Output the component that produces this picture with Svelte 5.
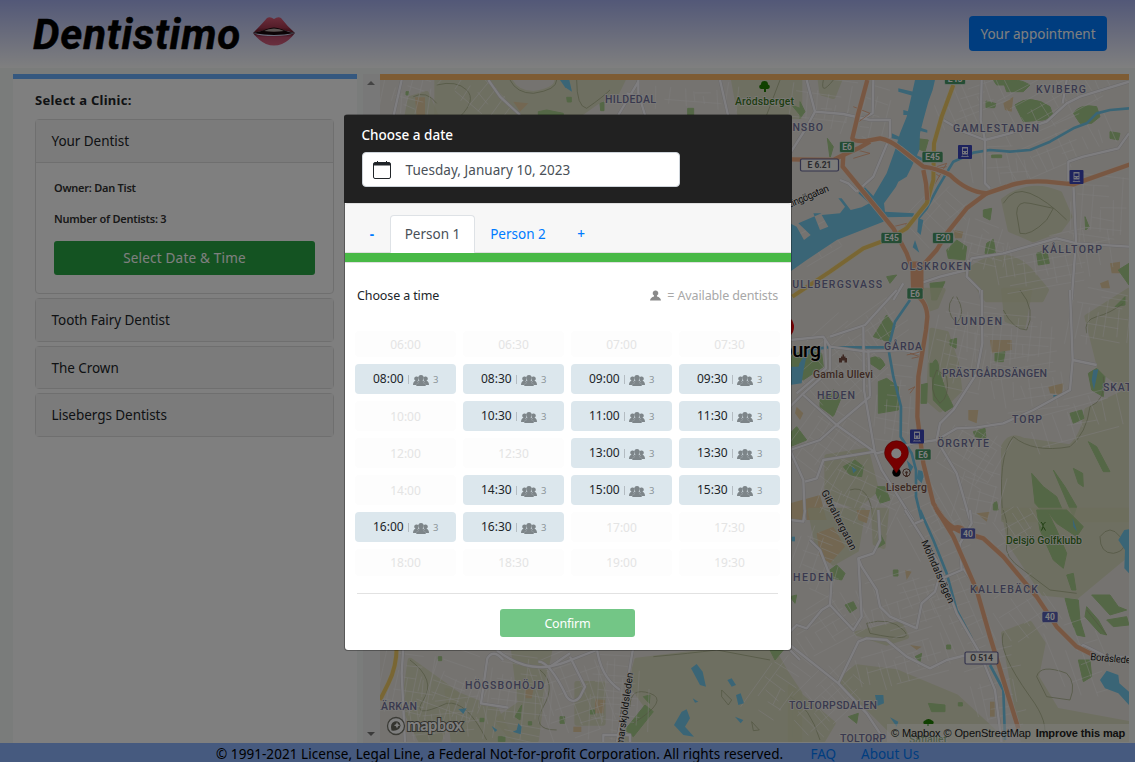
<script>
  const clinics = ['Tooth Fairy Dentist', 'The Crown', 'Lisebergs Dentists'];

  const open = new Set([
    '08:00', '08:30', '09:00', '09:30', '10:30', '11:00', '11:30', '13:00',
    '13:30', '14:30', '15:00', '15:30', '16:00', '16:30'
  ]);
  const slots = [];
  for (let h = 6; h < 20; h++) {
    for (const m of ['00', '30']) {
      const time = String(h).padStart(2, '0') + ':' + m;
      slots.push({ time, free: open.has(time) });
    }
  }

  // Map tiles: each tile has its own origin and is drawn at three units per pixel.
  const tiles = [
    {
      x: 370, y: 60,
      wood: ['M200 60L420 60Q440 100 490 100Q560 90 560 60L760 60L740 100L690 120L620 170L200 170Z', 'M1090 60H1290V170H1110Z', 'M120 115L170 100L200 170H110Z'],
      park: ['M505 155L530 150L580 160V172H505Z', 'M690 130l12 -4v26h-10Z', 'M953 145h18v24h-18Z', 'M590 112h14v14h-12Z', 'M1265 135l25 10v20Z', 'M108 95h8v10h-8Z'],
      sand: ['M135 112h30v55h-25Z', 'M430 125L475 130L450 155Z'],
      water: ['M570 60H598L606 95L585 82Z'],
      road: ['M95 60L70 170', 'M355 60L390 110L450 165', 'M805 60V100L825 165', 'M805 65L745 165', 'M1050 60L1075 170', 'M770 100L820 110'],
      trail: ['M200 75Q260 60 290 90T270 170', 'M420 60Q440 100 490 100Q560 90 560 60', 'M620 60Q620 140 650 145Q700 110 720 90', 'M1230 60L1190 165', 'M130 110Q170 90 200 130']
    },
    {
      x: 790, y: 70,
      wood: ['M530 605Q640 520 720 600L770 660L755 690H590Z', 'M640 390Q720 330 810 370L840 440L810 480L730 510L660 480Z', 'M90 30H150L130 80L95 70Z'],
      park: ['M675 105Q720 70 780 110L790 140L760 150L700 155Z', 'M850 130Q870 100 920 110L930 140L905 160H870Z', 'M640 35Q680 20 720 45L700 65H650Z', 'M375 205L415 210L405 245L370 230Z', 'M470 540L500 510L530 530L525 570L475 565Z', 'M590 520L610 508L617 550H585Z', 'M740 550L770 540L778 580L745 585Z', 'M420 640L465 635L440 690H425Z', 'M960 185L990 190L985 210L960 205Z', 'M985 600L1017 580V645Z', 'M580 420L605 415L600 450L580 440Z', 'M30 95L45 125L30 145Z', 'M112 205L130 230L120 265Z', 'M290 620L320 615L300 640Z', 'M588 93l30 8l-4 12h-26Z', 'M605 255h30v8h-30Z', 'M885 440l12 30l-10 10Z', 'M610 30h40v15h-30Z'],
      sand: ['M640 100L670 80L665 125L645 120Z', 'M490 480L520 485L515 505H495Z', 'M960 580L990 575V610H965Z', 'M930 640L955 630L960 655H935Z'],
      water: ['M375 30H435L428 60L415 95L400 150L390 190L388 240L365 290L350 320L325 335L318 350L282 400L285 425L372 430L370 440L290 442L280 455L140 510L50 570L0 605V460L20 470L42 510L62 495L25 460L95 430L70 430L90 480L115 470L95 435L150 430L165 410L145 385H155L182 420L215 412L238 400L205 370L225 352L250 378L290 310L315 240L330 190L350 140L365 75Z', 'M325 55L370 65V78L325 65Z', 'M340 120L360 125V135H340Z', 'M388 172L412 180V188L388 182Z', 'M305 190L328 200V210L305 205Z', 'M385 445L400 450L392 495L382 485Z', 'M375 510L388 548L368 532Z'],
      river: ['M385 445L410 415L445 350L490 275L550 248L600 240L660 245L720 240L780 215L850 175L890 160L920 130L960 120L1020 115', 'M300 215L360 250L400 270'],
      road: ['M50 30L75 125L160 132L240 150L300 150V200L250 320L200 365', 'M250 30L248 130L220 145', 'M75 125L45 180L0 250', 'M575 30L572 150L585 210V340L600 355', 'M460 150L520 185L585 210L660 190L770 155L830 100L870 80L1017 35', 'M830 30L818 100', 'M850 340L858 510L845 690', 'M1017 190L985 235L880 260L835 275V340', 'M390 640L450 620L530 600L545 565L640 550L800 505L860 520L1017 530', 'M535 570L530 620L570 660L575 690', 'M340 640L310 690', 'M150 330L175 340L200 365'],
      trunk: ['M490 45L455 140L432 220L430 330L410 400L350 475L300 505L220 535L120 605L7 680'],
      motorway: ['M232 30L205 130L187 205Q190 215 230 213L270 205Q300 210 330 235L400 290Q440 295 480 315Q530 365 590 370L650 350Q700 330 770 335L850 343L1020 283', 'M0 268L130 270L160 255L205 235L240 215', 'M160 255L158 290L240 390L310 475L350 550L368 600L370 670', 'M590 370L530 415L470 490L440 540L395 590', 'M400 300L408 340L412 390'],
      ramp: ['M190 110L240 130L200 160', 'M160 230L240 250L190 265', 'M310 470L350 460L330 500', 'M440 290L470 280L430 350L400 340', 'M450 320L420 300L470 290'],
      trail: ['M680 430Q680 390 720 400L790 415L770 450Q720 500 690 490Z', 'M640 400Q670 350 720 370T830 450', 'M100 30Q90 80 130 30']
    },
    {
      x: 790, y: 290,
      wood: ['M640 470Q660 430 700 450L840 470Q880 440 890 360L1017 300V690H640Z', 'M425 120L470 130L500 220L510 300L450 360L415 330Z', 'M890 80L1017 0V300L930 240Z', 'M400 0H460L440 50L410 60Z', 'M640 0H720L700 110L650 90Z', 'M110 500L230 480L260 600L200 650L110 620Z'],
      park: ['M250 140L290 75L315 110L295 155Z', 'M0 200L40 180L95 190L100 230L40 270L0 260Z', 'M240 205Q270 190 285 225L270 240L240 220Z', 'M265 275L290 265L325 290V360L265 370Z', 'M90 330L130 300L155 320L130 380L90 350Z', 'M0 430L20 410L50 450L0 470Z', 'M615 190L645 185L640 215H615Z', 'M480 150L500 145L498 175L480 165Z', 'M425 230Q440 180 450 250L470 310L490 350L465 365L430 330Z', 'M895 250L920 235L945 260L940 320L905 300Z', 'M840 370L875 360L882 385L850 400Z', 'M550 425L585 415L588 445L555 440Z', 'M390 285L412 280L410 340H392Z', 'M895 455L920 470L960 545L940 545Z', 'M195 510L220 530L215 560L180 555L160 530Z', 'M262 590L285 590L300 630L270 640L258 610Z', 'M725 550L760 590L800 620L830 690H780L735 640Z', 'M790 540L825 590L860 650L850 680Z', 'M850 535L878 550L880 590L865 580Z', 'M975 50L1005 20V45Z', 'M610 640L620 635L625 660H610Z', 'M420 220h10v40h-10Z'],
      sand: ['M600 150L665 150V180L605 190Z', 'M775 290L820 280L815 315L780 310Z', 'M535 360L565 360L560 400L535 390Z', 'M20 350L40 370L30 390L15 370Z', 'M0 640L90 615L110 690H0Z'],
      water: ['M0 230L25 230L40 200L50 195L40 245L35 280L0 285Z', 'M385 540L405 545L395 580L380 565Z', 'M910 240L925 238L912 300L905 270Z', 'M790 315h14v8h-14Z', 'M185 530L200 540L190 550Z', 'M350 510L370 530L360 550Z'],
      river: ['M360 30L315 95L295 175L310 260L333 350L332 440L365 490L378 540V620L395 690', 'M30 225L60 180L110 172L295 172'],
      road: ['M0 150L100 140L120 170L230 185L340 180L395 190', 'M120 170V240L35 315L0 350', 'M105 150L108 235L20 310', 'M220 110L222 300L255 490L275 540L350 660L370 690', 'M235 180L240 320', 'M320 0L225 105L120 140', 'M40 315L140 405L260 490', 'M240 320L140 405L90 450L0 480', 'M575 0L577 160L560 250L490 360L450 400L440 450L500 550L540 690', 'M840 0L848 210L840 300L730 360L640 400L560 412L500 415L440 450L370 460L260 490', 'M0 480L40 570L45 690', 'M45 575L80 565L100 510L255 485', 'M848 210L920 225'],
      motorway: ['M370 10Q410 30 412 80L408 120L385 260L382 380L400 520L430 640L470 700'],
      ramp: ['M360 190L390 200L365 205', 'M355 300L375 290L360 310', 'M350 195L395 185'],
      trail: ['M640 690Q620 500 670 440Q730 490 840 470Q890 430 900 350Q950 330 940 260', 'M890 130Q880 90 920 80T1000 40', 'M440 240Q410 300 450 340Q480 320 470 260Z', 'M490 20Q460 60 500 100Q530 70 500 20', 'M690 0Q740 60 710 120Q670 120 640 60', 'M180 600Q240 580 250 690']
    },
    {
      x: 790, y: 510,
      wood: ['M150 510L200 470L320 485L500 560L640 690H330L240 600Z', 'M640 0H1017V130L860 260L760 250L660 100Z', 'M640 370L720 340L760 400L740 500L800 600L1017 640V700H700Z', 'M200 370L330 340L350 380L290 400Z', 'M250 0H290L280 110L255 100Z', 'M0 530L130 640L100 690H0Z', 'M60 0H220L200 120L130 160L80 100Z'],
      park: ['M740 0H770L800 60L830 130L820 175L790 150L750 60Z', 'M770 0H830L880 50L860 80L800 40Z', 'M120 180L140 165L165 190L155 210L130 205Z', 'M165 285L190 275L200 295L180 308Z', 'M825 265L865 270L870 330L885 380L860 375L840 320Z', 'M890 290L925 330L950 375L930 370L885 320Z', 'M905 255L960 255L985 290L1010 300L960 315Z', 'M950 330L1010 320L1017 345L970 350Z', 'M865 450L900 450L905 500L880 515Z', 'M415 580L465 585V605H425Z', 'M310 180h14v18h-14Z', 'M470 405h12v12h-12Z', 'M270 70L285 100L265 112Z', 'M0 260L20 255L15 280Z', 'M375 440L395 430L390 455Z', 'M830 195L850 190L858 240L845 240Z', 'M175 620L205 610L200 640Z', 'M505 578h12v10h-12Z'],
      sand: ['M80 70L130 50L165 110L120 160L90 140Z', 'M120 0L140 25L125 15Z', 'M200 0H240L230 40L205 30Z', 'M560 10L600 5L590 35Z', 'M345 180L365 185L350 210Z', 'M360 405L395 410L380 420Z', 'M600 575h14v45h-14Z'],
      water: ['M985 90L1003 60L1017 58V190L1003 175L1005 120Z', 'M930 510L950 482L985 495L988 520L1017 545V585L985 550L945 535Z', 'M255 555L280 555L282 580L262 588Z', 'M300 622L325 635L320 650Z', 'M848 25L862 65L850 50Z', 'M5 80h10v14H5Z'],
      river: ['M390 0L430 90L470 190L500 300L545 385', 'M600 465L640 540L645 690'],
      road: ['M345 0L440 150L500 310L570 430L615 540L635 700', 'M540 0L545 40L510 100L515 180L445 210L435 245L395 280L380 355L300 320L270 290L260 240L215 170L205 145L250 130L270 90L265 0', 'M205 145L215 320L190 360L120 285L95 300L50 355L20 345L0 365', 'M120 285L125 210L90 120L60 90', 'M0 405L145 520L230 610L270 670', 'M145 520L205 395L230 385L290 390L350 440L420 475L470 450L530 435', 'M520 175L550 220', 'M375 40L400 30', 'M860 420L880 405L950 440L1017 440', 'M0 30L40 35L45 0'],
      motorway: ['M435 -10L490 80L560 240L600 380L640 510L685 655', 'M440 0Q480 60 530 70L580 85L640 140L740 260L800 350L860 410L910 435', 'M480 60Q510 40 530 70'],
      trail: ['M640 0Q660 60 650 100T700 180L780 240L860 250', 'M760 690Q780 640 720 560Q620 420 640 370', 'M890 300L950 375', 'M740 500Q750 460 830 490Q860 520 840 570L770 560Z', 'M0 560Q60 590 90 690', 'M230 340Q300 320 340 360T240 370Z', 'M930 80Q960 40 990 80T970 130Q930 130 930 80']
    },
    {
      x: 370, y: 640,
      wood: ['M800 60L1040 30H1210L1250 100L1290 160V310H760L830 200L780 130Z', 'M120 60L260 160L210 300H150L100 200Z', 'M430 30H540L520 130L500 300H430L380 240L450 190Z', 'M620 130H700V250H620Z', 'M230 150L380 210L430 310H250Z'],
      park: ['M765 270L825 195L850 215L790 290Z', 'M435 230L455 195L450 240Z', 'M1200 30H1240L1215 60Z', 'M820 170L840 165L838 190Z', 'M570 230h14v20h-14Z', 'M330 235h12v10h-12Z', 'M660 210h14v12h-14Z', 'M385 290h20v15h-20Z', 'M205 50h10v12h-10Z', 'M475 245h10v10h-10Z'],
      sand: ['M675 178L705 180L700 220H675Z', 'M465 145L490 150L485 175H467Z', 'M610 260h24v16h-24Z'],
      water: ['M963 85L980 72L998 95L1008 140L990 135Z', 'M912 255L935 215L950 208L960 235L945 260L972 290L940 285Z', 'M1072 120L1085 115L1098 135L1085 140Z', 'M1098 165L1112 160L1122 190L1105 195Z', 'M265 207L290 205L280 222Z', 'M428 275L440 270L445 250L455 260L452 283Z', 'M365 258L382 270L375 276Z', 'M968 175L985 185L975 188Z', 'M1095 230L1120 240L1112 250Z'],
      trunk: ['M80 20Q80 80 55 130L30 180'],
      road: ['M100 20L95 100L105 310', 'M400 60Q370 25 352 55L333 190L415 203', 'M380 30Q480 110 590 65L680 30', 'M505 65Q540 65 590 170Q610 195 630 170L645 140L600 50', 'M680 20Q690 110 750 150', 'M790 20L770 140L740 310', 'M700 310V285H780V310', 'M1260 30L1290 60', 'M540 80L600 40'],
      trail: ['M120 60Q200 120 160 180T230 190Q290 180 350 300', 'M850 50Q960 40 1040 30L1200 60', 'M780 200Q780 140 840 160T790 250', 'M1055 150L1085 180L1075 195L1055 170Z', 'M1145 245L1168 270L1150 272Z', 'M510 90Q560 130 520 200T560 270']
    }
  ];

  // Faint residential street grids: centre, half extents, angle and spacing.
  const districts = [
    [410, 95, 28, 20, 12, 8], [480, 98, 40, 18, 40, 9], [700, 96, 45, 18, 5, 10], [825, 105, 34, 26, 8, 10],
    [868, 115, 20, 30, 15, 9], [975, 100, 40, 22, -20, 8], [1055, 100, 60, 26, -28, 9], [1060, 148, 55, 24, -24, 9],
    [1000, 165, 30, 20, -8, 9], [940, 215, 30, 24, -45, 9], [1100, 210, 30, 35, 5, 8], [1055, 260, 60, 25, -10, 8],
    [980, 245, 28, 24, 15, 8], [825, 240, 36, 18, -30, 9], [880, 330, 30, 22, -35, 9], [840, 365, 38, 40, -42, 10],
    [895, 410, 20, 45, 8, 8], [960, 350, 28, 48, 12, 9], [1010, 345, 45, 30, 5, 7], [1030, 385, 38, 28, -8, 8],
    [1100, 320, 30, 30, 10, 8], [1080, 420, 50, 24, -15, 10], [975, 450, 30, 30, 30, 8], [830, 450, 36, 36, 35, 9],
    [860, 500, 40, 30, 25, 8], [930, 520, 28, 40, -28, 9], [980, 500, 22, 30, 15, 9], [1015, 530, 26, 20, -30, 9],
    [820, 560, 26, 32, 20, 8], [905, 600, 44, 28, -18, 8], [830, 625, 36, 25, -30, 8], [905, 660, 48, 24, -16, 8],
    [965, 620, 24, 50, -22, 10], [1000, 690, 28, 40, -14, 9], [1030, 610, 32, 30, -35, 12], [1085, 660, 30, 40, -20, 14],
    [830, 700, 40, 28, -42, 8], [410, 680, 28, 40, 10, 8], [455, 690, 36, 40, 20, 9], [520, 700, 40, 44, 8, 8],
    [575, 690, 36, 50, -20, 9], [620, 700, 30, 44, 4, 7], [780, 690, 22, 40, 35, 9], [450, 720, 40, 20, -5, 8]
  ];
  function streets([cx, cy, w, h, , s], seed) {
    let d = '';
    let r = seed * 7919 + 13;
    const rnd = () => (r = (r * 16807) % 2147483647) / 2147483647;
    rnd();
    for (let x = -w; x <= w; x += s * (0.8 + rnd() * 0.8)) {
      const a = -h + rnd() * h;
      d += `M${cx + x} ${cy + a}L${cx + x + rnd() * 5 - 2} ${cy + h - rnd() * h * 0.7}`;
    }
    for (let y = -h; y <= h; y += s * (0.8 + rnd() * 0.9)) {
      const a = -w + rnd() * w;
      d += `M${cx + a} ${cy + y}L${cx + w - rnd() * w * 0.8} ${cy + y + rnd() * 5 - 2}`;
    }
    return d;
  }

  // name, left, baseline, width
  const areas = [
    ['HILDEDAL', 605, 103, 51], ['KVIBERG', 1036, 93, 50], ['GAMLESTADEN', 953, 132, 86], ['RUNSBO', 777, 131, 46],
    ['KÅLLTORP', 1042, 253, 60], ['OLSKROKEN', 901, 270, 70], ['GULLBERGSVASS', 784, 288, 98], ['LUNDEN', 954, 325, 48],
    ['GÅRDA', 884, 350, 38], ['PRÄSTGÅRDSÄNGEN', 942, 377, 105], ['SKATÅS', 1103, 391, 43], ['HEDEN', 817, 399, 38],
    ['TORP', 1012, 423, 30], ['ÖRGRYTE', 937, 447, 52], ['HEDEN', 793, 581, 40], ['KALLEBÄCK', 970, 593, 68],
    ['TOLTORPSDALEN', 789, 709, 88], ['TOLTORP', 840, 742, 46], ['HÖGSBOHÖJD', 465, 689, 79], ['LÄRKAN', 375, 710, 42]
  ];
  // text, centre x, centre y, width, kind
  const shields = [
    ['E6', 847, 147, 15, 'green'], ['E45', 932.500, 157, 21, 'green'], ['E45', 955, 79, 21, 'green'],
    ['E45', 891.500, 238, 21, 'green'], ['E20', 943, 238, 21, 'green'], ['E6', 915, 293.500, 16, 'green'],
    ['E6', 923, 454.500, 16, 'green'], ['40', 968, 533.500, 15, 'blue'], ['40', 1050, 617, 16, 'blue'],
    ['E 6.21', 819.500, 165, 38, 'white'], ['O 514', 981.500, 658, 33, 'white']
  ];
  const stations = [[965, 152], [1076.500, 177], [917, 436.500]];
</script>

{#snippet people()}
  <svg class="people" viewBox="0 0 16 11" aria-hidden="true">
    <path d="M3.700 1.500a2 2 0 0 1 1.400.5A3.500 3.500 0 0 0 5.500 5Q4 6 3.500 10H0Q0 6.500 2.500 5.700A2.200 2.200 0 0 1 3.700 1.500ZM12.300 1.500a2 2 0 0 0-1.400.5A3.500 3.500 0 0 1 10.500 5Q12 6 12.500 10H16Q16 6.500 13.500 5.700A2.200 2.200 0 0 0 12.300 1.500Z" />
    <path d="M8 0a2.800 2.800 0 0 1 1.500 5.200Q12.500 6.300 12.700 9.500V11H3.300V9.500Q3.500 6.300 6.500 5.200A2.800 2.800 0 0 1 8 0Z" />
    <path d="M4.500 9L6 6.500M11.500 9L10 6.500" stroke="#a5adb2" stroke-width=".5" />
  </svg>
{/snippet}

<div class="page">
  <header class="top">
    <div class="logo">
      <span>Dentistimo</span>
      <svg viewBox="0 0 44 30" class="lips" aria-hidden="true">
        <defs>
          <linearGradient id="upper" x1="0" y1="0" x2="0" y2="1"><stop offset="0" stop-color="#d85a76" /><stop offset=".65" stop-color="#a83a52" /><stop offset="1" stop-color="#591622" /></linearGradient>
          <linearGradient id="lower" x1="0" y1="0" x2="0" y2="1"><stop offset="0" stop-color="#5a1a2c" /><stop offset=".35" stop-color="#c05070" /><stop offset="1" stop-color="#d4607e" /></linearGradient>
        </defs>
        <path d="M1 17Q8 20 22 20T43 17Q37 25 30 28Q22 31 14 28Q7 25 1 17Z" fill="url(#lower)" />
        <path d="M1 17Q10 8 15 2Q18 0 22 3Q26 0 29 2Q35 10 43 17Q34 15 30 14Q22 11 14 14Z" fill="url(#upper)" />
        <path d="M1 17Q10 15 15 13Q22 10 29 13Q35 16 43 17Q32 19 22 19T1 17Z" fill="#16060a" />
        <path d="M12 15Q16 12.500 22 12.500T32 15Q22 16.500 12 15Z" fill="#b5a8a4" />
      </svg>
    </div>
    <button class="appointment"><span>Your appointment</span></button>
  </header>

  <main>
    <aside>
      <h2>Select a Clinic:</h2>
      <section class="card first">
        <div class="card-head">Your Dentist</div>
        <div class="card-body">
          <p class="owner">Owner: Dan Tist</p>
          <p class="count">Number of Dentists: 3</p>
          <button class="select">Select Date &amp; Time</button>
        </div>
      </section>
      {#each clinics as c}
        <section class="card"><div class="card-head">{c}</div></section>
      {/each}
    </aside>
    <div class="scroll"><i class="up"></i><i class="down"></i></div>
    <div class="map">
      <svg viewBox="380 80 749 662" width="749" height="662">
        <rect x="380" y="80" width="749" height="662" fill="#ebe7e1" />
        {#each tiles as t}
          <g transform="translate({t.x} {t.y}) scale(.33333)">
            {#each t.wood as d}<path {d} fill="#d9dcb9" opacity=".75" stroke="#d9dcb9" stroke-width="14" stroke-linejoin="round" />{/each}
            {#each t.sand as d}<path {d} fill="#e6cfa4" />{/each}
            {#each t.park as d}<path {d} fill="#a9ce8c" stroke="#a9ce8c" stroke-width="3" stroke-linejoin="round" />{/each}
            {#each t.trail as d}<path {d} fill="none" stroke="#a5ad83" stroke-width="2.200" />{/each}
          </g>
        {/each}
        {#each districts as g, i}
          <path d={streets(g, i + 1)} transform="rotate({g[4]} {g[0]} {g[1]})" stroke="#fdfbfa" stroke-width=".8" opacity=".55" fill="none" />
        {/each}
        {#each tiles as t}
          <g transform="translate({t.x} {t.y}) scale(.33333)" fill="none" stroke-linejoin="round">
            {#each t.water as d}<path {d} fill="#74cbed" />{/each}
            {#each t.river ?? [] as d}<path {d} stroke="#74cbed" stroke-width="8" />{/each}
          </g>
        {/each}
        {#each tiles as t}
          <g transform="translate({t.x} {t.y}) scale(.33333)" fill="none" stroke-linejoin="round">
            {#each t.road as d}<path {d} stroke="#d5d2d3" stroke-width="10" />{/each}
            {#each t.road as d}<path {d} stroke="#fcfbff" stroke-width="7" />{/each}
            {#each t.ramp ?? [] as d}<path {d} stroke="#eeaa82" stroke-width="2.500" />{/each}
            {#each t.trunk ?? [] as d}<path {d} stroke="#efe8d0" stroke-width="17" /><path {d} stroke="#f2cd67" stroke-width="12" />{/each}
          </g>
        {/each}
        {#each tiles as t}
          <g transform="translate({t.x} {t.y}) scale(.33333)" fill="none" stroke-linejoin="round">
            {#each t.motorway ?? [] as d}<path {d} stroke="#f2e4d8" stroke-width="17" />{/each}
            {#each t.motorway ?? [] as d}<path {d} stroke="#f0ae85" stroke-width="13" />{/each}
          </g>
        {/each}
        <path d="M911 264l5 0v24h5v-20" stroke="#f0ae85" stroke-width="5" fill="none" />

        <g class="area">
          {#each areas as [name, x, y, w]}<text {x} {y} textLength={w}>{name}</text>{/each}
        </g>

        <g class="street">
          <text textLength="44" transform="translate(789 208) rotate(-23)">Lingögatan</text>
          <text textLength="66" transform="translate(821 492) rotate(63)">Gibraltargatan</text>
          <text textLength="68" transform="translate(921 542) rotate(66)">Mölndalsvägen</text>
          <text textLength="95" transform="translate(620 767) rotate(-82)">Hammarskjöldsleden</text>
          <text textLength="46" transform="translate(1090 660) rotate(5)">Boråsleden</text>
        </g>
        <text class="city" x="718" y="357" textLength="103">Gothenburg</text>
        <g class="poi green">
          <text x="735" y="105" textLength="59">Arödsberget</text>
          <text x="1006" y="544" textLength="76">Delsjö Golfklubb</text>
          <text x="909" y="743" textLength="38">Safjället</text>
        </g>
        <g class="poi brown">
          <text x="813" y="378" textLength="60">Gamla Ullevi</text>
          <text x="886" y="491" textLength="41">Liseberg</text>
        </g>
        <g fill="#1f8000">
          <path d="M764 92v-3h-3a2.300 2.300 0 0 1 0-4.500a3.500 3.500 0 0 1 7 0a2.300 2.300 0 0 1 0 4.500h-2v3Z" />
          <path d="M927 726v-2h-3a2 2 0 0 1 1-3.500a4 3 0 0 1 7 0a2 2 0 0 1 1 3.500h-4v2Z" />
        </g>
        <path d="M1041 522l2 2.500l2.500-2.500M1043 524v3l-1.500 3.500M1043.500 527l2 3.500" stroke="#3d7a23" fill="none" />
        <path d="M839 362v-4h2v-1.500h1.500v-2h1.500v2h1.500v1.500h1.500v4.500h-2.500v-2h-2.500v2h-3Z" fill="#7a5144" />
        <g stroke="#7a5144" fill="none"><circle cx="906.500" cy="472.500" r="3.700" /><path d="M906.500 472v4M905 476.500h3" /><circle cx="906.500" cy="472.500" r="1" /></g>

        {#each shields as [t, x, y, w, kind]}
          <g class="shield {kind}">
            <rect x={x - w / 2} y={y - (kind === 'white' ? 6 : 5.5)} width={w} height={kind === 'white' ? 12 : 11} rx="1.500" />
            <text {x} y={y + 3} text-anchor="middle">{t}</text>
          </g>
        {/each}
        {#each stations as [x, y]}
          <g transform="translate({x - 7} {y - 7})">
            <rect width="14" height="14" rx="1" fill="#3c47bd" />
            <path d="M4 2h6v7.500H4ZM5 3.500v2.500h4V3.500ZM5 7v1h1v-1ZM8 7v1h1v-1Z" fill="#e8e8fa" fill-rule="evenodd" />
            <path d="M3.500 12l1-1.500M10.500 12l-1-1.500M4 11.500h6" stroke="#e8e8fa" stroke-width=".8" fill="none" />
          </g>
        {/each}

        <circle cx="782" cy="327" r="12" fill="#e80008" />
        <circle cx="896.500" cy="472.500" r="4.200" fill="#000" />
        <g transform="translate(0 1)">
          <path d="M896.300 472Q893 466 888 460A11.900 11.900 0 1 1 905 460Q900 466 896.300 472Z" fill="#ec0000" stroke="#a00000" stroke-width=".6" />
          <circle cx="896.300" cy="452.500" r="5" fill="#fff" />
        </g>

        <g fill="#fff" fill-opacity=".9" stroke="#77776c">
          <circle cx="396" cy="726" r="8.500" stroke-width="1.300" />
        </g>
        <path d="M391.500 730.500q-2-7 3-9q5-1 6 4q-1 6-9 5Z" fill="#66665c" />
        <path d="M397 722l1 2.200l2.200 1l-2.200 1l-1 2.200l-1-2.200l-2.200-1l2.200-1Z" fill="#fff" />
        <text class="mapbox" x="407" y="731" textLength="56">mapbox</text>
      </svg>
      <div class="attribution">© Mapbox © OpenStreetMap <b>Improve this map</b></div>
    </div>
  </main>

  <footer><span class="copy">© 1991-2021 License, Legal Line, a Federal Not-for-profit Corporation. All rights reserved.</span><a class="faq" href="#faq">FAQ</a><a class="about" href="#about">About Us</a></footer>
</div>

<div class="backdrop">
  <div class="modal">
    <div class="date-head">
      <div class="date-title">Choose a date</div>
      <div class="date">
        <svg viewBox="0 0 18 18" aria-hidden="true"><path d="M2 1.500H16Q17.500 1.500 17.500 3V16Q17.500 17.500 16 17.500H2Q.5 17.500 .5 16V3Q.5 1.500 2 1.500Z" fill="none" stroke="#212529" /><path d="M1 2H17V4.500H1Z" fill="#212529" /><path d="M4.500 0V2M13.500 0V2" stroke="#212529" /></svg>
        <span>Tuesday, January 10, 2023</span>
      </div>
    </div>
    <div class="tabs">
      <span class="tab minus">-</span>
      <span class="tab active">Person 1</span>
      <span class="tab second">Person 2</span>
      <span class="tab plus">+</span>
    </div>
    <div class="bar"></div>
    <div class="times-head">
      <span class="choose">Choose a time</span>
      <span class="legend">
        <svg viewBox="0 0 12 11" aria-hidden="true"><path d="M6 0a3 3 0 0 1 1.600 5.600V6.600Q11.500 7.500 12 11H0Q.5 7.500 4.400 6.600V5.600A3 3 0 0 1 6 0Z" fill="#8a8a8a" /></svg>
        <span>= Available dentists</span>
      </span>
    </div>
    <div class="slots">
      {#each slots as s}
        <div class="slot" class:free={s.free}>
          <span class="time">{s.time}</span>
          {#if s.free}<span class="sep"></span>{@render people()}<small>3</small>{/if}
        </div>
      {/each}
    </div>
    <div class="confirm"><button>Confirm</button></div>
  </div>
</div>

<style>
  :global(body) {
    margin: 0;
    overflow: hidden;
    font-family: 'Noto Sans', 'Open Sans', sans-serif;
    color: #212529;
  }
  button {
    font: inherit;
    border: 0;
    padding: 0;
    white-space: nowrap;
  }
  .page {
    box-sizing: border-box;
    height: 762px;
    display: flex;
    flex-direction: column;
    background: #f4f9f6;
  }
  .top {
    height: 68px;
    box-sizing: border-box;
    padding: 0 28px 0 33px;
    display: flex;
    justify-content: space-between;
    background: linear-gradient(#a6b1f0, #fff);
  }
  .logo {
    display: flex;
    gap: 11px;
    font: italic 700 42px/70px Roboto, sans-serif;
    letter-spacing: 0.85px;
    color: #000;
    -webkit-text-stroke: 0.5px #000;
  }
  .lips {
    width: 44px;
    height: 30px;
    margin-top: 16px;
  }
  .appointment {
    margin-top: 16px;
    width: 138px;
    height: 35px;
    border-radius: 4px;
    background: #007bff;
    color: #fff;
    font-size: 13.5px;
  }
  main {
    flex: 1;
    display: flex;
    padding: 6px 6px 0 13px;
  }
  aside {
    width: 344px;
    box-sizing: border-box;
    background: #fff;
    border-top: 5px solid #6bb0ff;
    padding: 12px 23px 0 22px;
  }
  h2 {
    margin: 0 0 9px;
    font-size: 13px;
    line-height: 19px;
    font-weight: 700;
    letter-spacing: 0.27px;
  }
  .card {
    box-sizing: border-box;
    border: 1px solid #dfdfdf;
    border-radius: 4px;
    margin-bottom: 4px;
    width: 299px;
  }
  .card-head {
    background: #f7f7f7;
    height: 41.500px;
    line-height: 43px;
    padding-left: 15.500px;
    font-size: 13.5px;
    letter-spacing: -0.05px;
  }
  .first {
    height: 175px;
  }
  .first .card-head {
    border-bottom: 1px solid #dfdfdf;
  }
  .card-body {
    padding: 17px 18px;
  }
  .card-body p {
    margin: 0 0 15px;
    font-size: 11px;
    line-height: 16px;
    font-weight: 600;
    letter-spacing: -0.25px;
    color: #333;
  }
  .card-body .count {
    margin-bottom: 14px;
  }
  .select {
    display: block;
    width: 261px;
    height: 34px;
    border-radius: 3px;
    background: #28a745;
    color: #fff;
    font-size: 13.5px;
    letter-spacing: 0.2px;
  }
  .scroll {
    width: 17px;
    margin-left: 6px;
    background: #f1f1f1;
    display: flex;
    flex-direction: column;
    justify-content: space-between;
    align-items: center;
    padding: 7px 1px 7px 0;
    box-sizing: border-box;
  }
  .scroll i {
    border: 4px solid transparent;
  }
  .scroll .up {
    border-top: 0;
    border-bottom-color: #888;
  }
  .scroll .down {
    border-bottom: 0;
    border-top-color: #777;
  }
  .map {
    width: 749px;
    border-top: 6px solid #fdb866;
    height: 663px;
    position: relative;
    overflow: hidden;
    font-family: Roboto, sans-serif;
  }
  .map svg {
    display: block;
  }
  .area text {
    font-size: 10.5px;
    fill: #73739c;
    stroke: #f4f2ee;
    stroke-width: 1.5px;
    paint-order: stroke;
    font-family: Roboto, sans-serif;
    font-weight: 500;
  }
  .street text {
    font-size: 10px;
    fill: #222;
    stroke: #f4f2ee;
    stroke-width: 1.5px;
    paint-order: stroke;
  }
  .city {
    font-size: 20px;
    font-weight: 500;
    fill: #000;
    stroke: #f4f2ee;
    stroke-width: 1.5px;
    paint-order: stroke;
  }
  .poi text {
    font-size: 10.5px;
    font-weight: 500;
    stroke: #f4f2ee;
    stroke-width: 1.5px;
    paint-order: stroke;
  }
  .poi.green text {
    fill: #3d7a23;
  }
  .poi.brown text {
    fill: #7a5144;
  }
  .shield text {
    font-size: 8.5px;
    font-weight: 700;
    fill: #fff;
  }
  .shield rect {
    stroke: #f4f2ee;
    stroke-width: 0.6px;
  }
  .shield.green rect {
    fill: #4a9a68;
  }
  .shield.blue rect {
    fill: #5a62b8;
  }
  .shield.white rect {
    fill: #faf8f4;
    stroke: #666699;
    stroke-width: 1.2px;
  }
  .shield.white text {
    fill: #55555c;
  }
  .mapbox {
    font: 900 16.5px Lato, sans-serif;
    fill: #fff;
    stroke: #66665c;
    stroke-width: 2px;
    paint-order: stroke;
  }
  .attribution {
    position: absolute;
    right: 0;
    bottom: 1px;
    width: 242px;
    height: 18px;
    box-sizing: border-box;
    padding-left: 4px;
    background: rgba(255, 255, 255, 0.5);
    font: 11px/18px 'Liberation Sans', sans-serif;
    letter-spacing: -0.1px;
    color: #222;
    white-space: nowrap;
  }
  .attribution b {
    margin-left: 2px;
  }
  footer {
    height: 19px;
    background: #8cb4ff;
    font-size: 13.5px;
    line-height: 23px;
    color: #000;
    white-space: nowrap;
    padding-left: 216px;
    display: flex;
    overflow: hidden;
  }
  footer a {
    color: #007bff;
    text-decoration: none;
  }
  .copy {
    width: 594.500px;
    letter-spacing: 0.055px;
  }
  .faq {
    width: 50.500px;
  }
  .backdrop {
    position: absolute;
    inset: 0;
    background: rgba(0, 0, 0, 0.5);
  }
  .modal {
    box-sizing: border-box;
    width: 448px;
    height: 537px;
    margin: 114px 0 0 344px;
    background: #fff;
    border: 1px solid rgba(0, 0, 0, 0.3);
    border-radius: 4px;
    background-clip: padding-box;
  }
  .date-head {
    height: 88px;
    box-sizing: border-box;
    margin: 0 -1px;
    background: #212121;
    border-radius: 2px 2px 0 0;
    color: #fff;
    padding: 10px 0 0 18px;
  }
  .date-title {
    font-size: 13.5px;
    line-height: 20px;
    margin: 0 0 7px -0.5px;
    font-weight: 500;
  }
  .date {
    box-sizing: border-box;
    width: 318px;
    height: 35px;
    background: #fff;
    border: 1px solid #ced4da;
    border-radius: 4px;
    display: flex;
    align-items: center;
    gap: 14.500px;
    padding-left: 10px;
    color: #495057;
    font-size: 13.5px;
    letter-spacing: 0.05px;
  }
  .date span {
    margin-top: 1px;
  }
  .date svg {
    width: 18px;
    height: 18px;
  }
  .tabs {
    height: 50px;
    box-sizing: border-box;
    background: #f7f7f7;
    border-top: 1px solid #dfdfdf;
    border-bottom: 1px solid #dfdfdf;
    border-radius: 3px 3px 0 0;
    padding: 11px 0 0 9px;
    display: flex;
    font-size: 13.5px;
    line-height: 38px;
    color: #007bff;
  }
  .tab {
    text-align: center;
    white-space: nowrap;
  }
  .minus {
    width: 36px;
    font-weight: 700;
  }
  .active {
    box-sizing: border-box;
    width: 85px;
    height: 38px;
    line-height: 37px;
    border: 1px solid #dee2e6;
    border-bottom: 0;
    border-radius: 4px 4px 0 0;
    background: #fff;
    color: #495057;
  }
  .second {
    width: 86px;
  }
  .plus {
    width: 40px;
    font-weight: 500;
  }
  .bar {
    height: 9px;
    background: #48b946;
    border-bottom: 1px solid #dfdfdf;
  }
  .times-head {
    display: flex;
    justify-content: space-between;
    padding: 22px 13px 0 12px;
    height: 46px;
    font-size: 12.5px;
    line-height: 21px;
    letter-spacing: -0.12px;
  }
  .legend {
    display: flex;
    align-items: center;
    gap: 6px;
    height: 21px;
    color: #a8a8a8;
  }
  .legend svg {
    width: 11px;
    height: 11px;
  }
  .slots {
    display: grid;
    grid-template-columns: repeat(4, 101px);
    grid-template-rows: 26px repeat(5, 30px) 27px;
    gap: 7px;
    padding-left: 10px;
  }
  .slot {
    border-radius: 4px;
    background: #fdfdfd;
    color: #e4e4e4;
    font-size: 12px;
    display: flex;
    align-items: center;
    justify-content: center;
  }
  .free {
    background: #dce7ed;
    color: #212529;
    justify-content: flex-start;
    padding-left: 18px;
  }
  .free .time {
    width: 35px;
    margin-top: -2px;
  }
  .sep {
    width: 1px;
    height: 9px;
    background: #b4bcc2;
    margin-right: 4px;
  }
  .people {
    width: 16px;
    height: 11px;
    fill: #7d8589;
    margin-top: 3px;
  }
  small {
    font-size: 9.5px;
    color: #8c9499;
    margin-left: 4px;
  }
  .confirm {
    margin: 17px 13px 0 12px;
    border-top: 1px solid #e2e2e2;
    padding-top: 15px;
    text-align: center;
  }
  .confirm button {
    width: 135px;
    height: 28px;
    border-radius: 3px;
    background: #73c686;
    color: #fff;
    font-size: 12.5px;
    letter-spacing: -0.2px;
    display: block;
    margin: 0 auto;
  }
</style>
